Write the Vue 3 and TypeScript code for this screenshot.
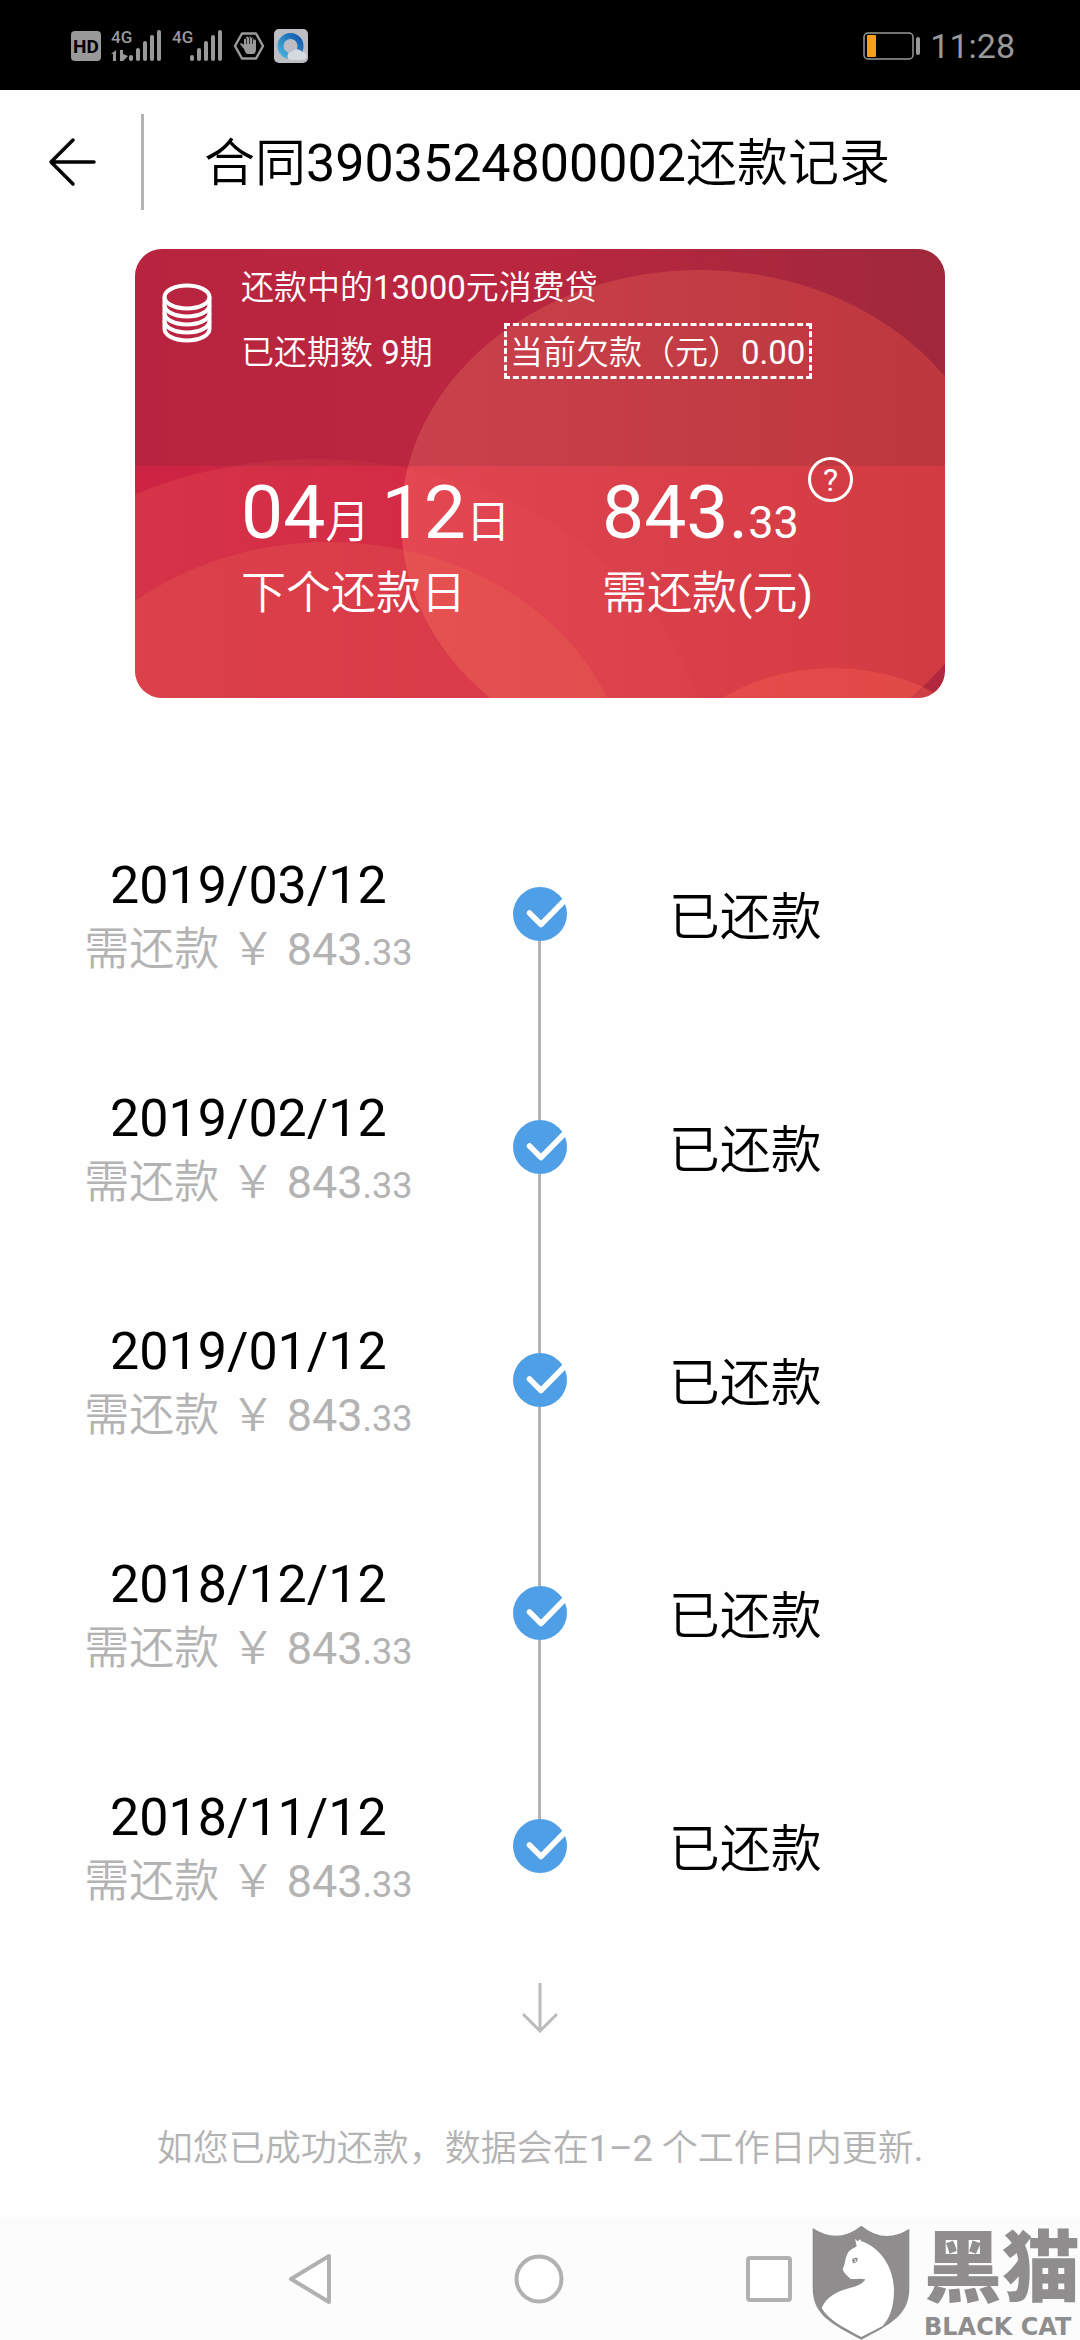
<script setup lang="ts">
interface Installment {
  date: string
  whole: string
  cents: string
  status: string
}

const contractNo = '3903524800002'

const installments: Installment[] = [
  '2019/03/12',
  '2019/02/12',
  '2019/01/12',
  '2018/12/12',
  '2018/11/12',
].map((date) => ({ date, whole: '843', cents: '.33', status: '已还款' }))
</script>

<template>
  <div class="page">
    <div class="statusbar">
      <svg class="status-icons" width="238" height="52" viewBox="71 20 238 52" aria-hidden="true">
        <rect x="71" y="31" width="30" height="30" rx="4" fill="#999" />
        <text x="86" y="53" font-size="19" font-weight="700" text-anchor="middle" fill="#000">HD</text>
        <g fill="#999">
          <text class="net" x="111" y="43" font-size="17">4G</text>
          <text class="net" x="172" y="43" font-size="17">4G</text>
          <path d="M111 54l5-4v11h-3v-7zM120 50h3v4l5 2-5 5h-3z" />
          <rect x="129" y="55" width="4" height="6" rx="2" />
          <rect x="136" y="48" width="4" height="13" rx="2" />
          <rect x="143" y="41" width="4" height="20" rx="2" />
          <rect x="150" y="35" width="4" height="26" rx="2" />
          <rect x="157" y="30" width="4" height="31" rx="2" />
          <rect x="190" y="55" width="4" height="6" rx="2" />
          <rect x="197" y="48" width="4" height="13" rx="2" />
          <rect x="204" y="41" width="4" height="20" rx="2" />
          <rect x="211" y="35" width="4" height="26" rx="2" />
          <rect x="218" y="30" width="4" height="31" rx="2" />
        </g>
        <path d="M242 33.500h14l7 12.500-7 12.500h-14l-7-12.500z" fill="none" stroke="#999" stroke-width="2.500" stroke-linejoin="round" />
        <path d="M244 49l-4-5c0-1 2-1 3 0l1 1v-5c0-2 2-2 2 0v-2c0-2 2-2 2.500 0 0-2 2.500-2 2.500 0v1c0-2 2.500-2 2.500 0v2c0-2 2.500-2 2.500 0v8c0 3-1 5-3 5h-5c-2 0-3-2-4-5z" fill="#999" />
        <path d="M246.500 38v6M249.500 37v7M252.500 38v6" stroke="#000" stroke-width="0.700" />
        <defs>
          <linearGradient id="ring" x1="0" y1="1" x2="1" y2="0">
            <stop offset="0" stop-color="#45b3dc" />
            <stop offset="1" stop-color="#1258b0" />
          </linearGradient>
        </defs>
        <rect x="274" y="29" width="34" height="34" rx="5" fill="#bcbec4" />
        <circle cx="290.500" cy="46" r="10" fill="none" stroke="url(#ring)" stroke-width="6" />
        <path d="M291 60a4 4 0 0 1 1-8 6 6 0 0 1 10 0 4 4 0 0 1 1 8z" fill="#d5dae1" />
      </svg>
      <div class="status-right">
        <svg width="58" height="28" viewBox="0 0 58 28" aria-hidden="true">
          <rect x="1" y="1" width="49" height="26" rx="4" fill="none" stroke="#999" stroke-width="1.500" />
          <rect x="4" y="3" width="9" height="22" rx="1" fill="#ff9c1c" />
          <rect x="53" y="5" width="4" height="18" rx="2" fill="#999" />
        </svg>
        <time class="clock">11:28</time>
      </div>
    </div>

    <header class="header">
      <button class="back" type="button" aria-label="返回">
        <svg width="48" height="50" viewBox="0 0 48 50" fill="none" stroke="#000" stroke-width="3.500" stroke-linecap="round" stroke-linejoin="round">
          <path d="M46 25H3M25 3L3 25l22 22" />
        </svg>
      </button>
      <h1 class="title">合同<span class="number">{{ contractNo }}</span>还款记录</h1>
    </header>

    <main class="main">
      <section class="card">
        <svg class="card-bg" viewBox="0 0 810 449" preserveAspectRatio="none" aria-hidden="true">
          <defs>
            <linearGradient id="base">
              <stop offset="0" stop-color="#cc2442" />
              <stop offset="0.450" stop-color="#cf2643" />
              <stop offset="1" stop-color="#b1283e" />
            </linearGradient>
            <linearGradient id="sun">
              <stop offset="0" stop-color="#e04551" />
              <stop offset="1" stop-color="#d13940" />
            </linearGradient>
            <linearGradient id="hill">
              <stop offset="0.200" stop-color="#ff7e64" stop-opacity="0.200" />
              <stop offset="0.600" stop-color="#ff5a5a" stop-opacity="0.120" />
              <stop offset="1" stop-color="#ff5a5a" stop-opacity="0.060" />
            </linearGradient>
          </defs>
          <rect width="810" height="449" fill="url(#base)" />
          <ellipse cx="565" cy="271" rx="299" ry="250" fill="url(#sun)" />
          <ellipse cx="180" cy="542" rx="400" ry="332" fill="url(#hill)" />
          <ellipse cx="194" cy="542" rx="300" ry="249" fill="#f07055" fill-opacity="0.240" />
          <ellipse cx="698" cy="576" rx="189" ry="157" fill="#f2604f" fill-opacity="0.420" />
          <rect width="810" height="217" fill="#282828" fill-opacity="0.120" />
        </svg>

        <svg class="coins" width="50" height="60" viewBox="0 0 50 60" fill="none" stroke="#fff" stroke-width="4" aria-hidden="true">
          <ellipse cx="25" cy="14" rx="22.500" ry="11.500" />
          <path d="M2.500 14v32a22.500 11.500 0 0 0 45 0V14" />
          <path d="M2.500 22a22.500 11.500 0 0 0 45 0M2.500 30a22.500 11.500 0 0 0 45 0M2.500 38a22.500 11.500 0 0 0 45 0" />
        </svg>

        <div class="card-body">
          <p class="loan">还款中的13000元消费贷</p>
          <div class="progress">
            <span class="paid">已还期数 9期</span>
            <span class="debt">当前欠款（元）0.00</span>
          </div>
          <div class="figures">
            <div class="figure">
              <p class="value">04<small>月 </small>12<small>日</small></p>
              <p class="label">下个还款日</p>
            </div>
            <div class="figure">
              <p class="value">843.<small>33</small></p>
              <p class="label">需还款(元)</p>
              <button class="help" type="button" aria-label="说明">?</button>
            </div>
          </div>
        </div>
      </section>

      <ol class="timeline">
        <li v-for="item in installments" :key="item.date" class="entry">
          <div class="due">
            <time class="date number">{{ item.date }}</time>
            <span class="amount">需还款 ￥ {{ item.whole }}<small>{{ item.cents }}</small></span>
          </div>
          <div class="marker">
            <svg class="dot" width="54" height="54" viewBox="0 0 54 54" aria-hidden="true">
              <circle cx="27" cy="27" r="27" fill="#4f9fe6" />
              <path d="M16.500 26L28 37.500 52 13" fill="none" stroke="#fff" stroke-width="5.500" stroke-linecap="round" stroke-linejoin="round" />
            </svg>
          </div>
          <span class="status">{{ item.status }}</span>
        </li>
      </ol>

      <svg class="more" width="36" height="50" viewBox="0 0 36 50" fill="none" stroke="#bbb" stroke-width="3" aria-hidden="true">
        <path d="M18 0v48M1 31l17 17 17-17" />
      </svg>
      <p class="note">如您已成功还款，数据会在1–2 个工作日内更新.</p>
    </main>

    <nav class="navbar">
      <button type="button" aria-label="后退">
        <svg width="44" height="52" viewBox="0 0 44 52" fill="#fff" stroke="#b1b1b1" stroke-width="4" stroke-linejoin="round">
          <path d="M41 3v46L3 26z" />
        </svg>
      </button>
      <button type="button" aria-label="主屏幕">
        <svg width="50" height="50" viewBox="0 0 50 50" fill="#fff" stroke="#b1b1b1" stroke-width="4">
          <circle cx="25" cy="25" r="22.500" />
        </svg>
      </button>
      <button type="button" aria-label="最近任务">
        <svg width="46" height="46" viewBox="0 0 46 46" fill="#fff" stroke="#b1b1b1" stroke-width="4">
          <rect x="2" y="2" width="42" height="42" rx="2" />
        </svg>
      </button>
    </nav>

    <div class="watermark">
      <svg width="98" height="115" viewBox="92 73 294 345" aria-hidden="true">
        <path d="M94 82Q170 132 240 75Q310 132 384 84V262C384 345 325 372 240 417C155 372 94 345 94 262Z" fill="#8f8d8e" />
        <path d="M221 114L229 122L237 116L240 122C292 138 337 195 338 268C338 320 325 352 304 376L240 409C190 382 140 358 121 322C135 290 165 272 205 262C230 256 244 250 252 236C235 232 222 236 208 235C200 226 187 218 184 205C192 192 190 172 200 156C208 144 222 142 226 136Z" fill="#fff" />
        <path d="M212 178C214 172 222 170 229 173C230 182 224 188 214 188C216 184 213 181 212 178Z" fill="#8f8d8e" />
        <path d="M219 174l4 6-3 5" fill="none" stroke="#fff" stroke-width="3" />
      </svg>
      <div class="brand">
        <span class="brand-cn">黑猫</span>
        <span class="brand-en">BLACK CAT</span>
      </div>
    </div>
  </div>
</template>

<style>
body {
  margin: 0;
  background: #fff;
}
</style>

<style scoped>
.page {
  position: relative;
  display: flex;
  flex-direction: column;
  min-height: 100vh;
  background: #fefefe;
  color: #000;
  font-family: Roboto, "Noto Sans CJK SC DemiLight", "Noto Sans CJK SC", sans-serif;
  font-weight: 400;
}

p,
h1,
ol {
  margin: 0;
  padding: 0;
  font-weight: inherit;
}

button {
  display: flex;
  padding: 0;
  border: 0;
  background: none;
  color: inherit;
  font-family: inherit;
}

.statusbar {
  display: flex;
  box-sizing: border-box;
  align-items: center;
  justify-content: space-between;
  height: 90px;
  padding: 2px 65px 0 71px;
  background: #000;
}

.net {
  font-family: "Liberation Sans Narrow", Roboto, sans-serif;
  font-weight: 500;
}

.status-right {
  display: flex;
  align-items: center;
  gap: 9px;
}

.clock {
  color: #999;
  font-size: 34px;
  line-height: 36px;
}

.header {
  display: flex;
  align-items: center;
  height: 144px;
  padding-left: 48px;
}

.back {
  align-items: center;
  height: 96px;
  padding-right: 45px;
  border-right: 3px solid #b3b3b3;
}

.title {
  margin-left: 60px;
  padding-top: 4px;
  font-size: 51px;
  line-height: 60px;
}

.number {
  font-size: 52px;
}

.main {
  display: flex;
  flex: 1;
  flex-direction: column;
  align-items: center;
}

.card {
  position: relative;
  display: flex;
  box-sizing: border-box;
  width: 75%;
  margin-top: 15px;
  padding: 14px 27px 74px;
  overflow: hidden;
  border-radius: 27px;
  color: #fff;
}

.card-bg {
  position: absolute;
  inset: 0;
  width: 100%;
  height: 100%;
}

.coins {
  position: relative;
  flex: none;
  margin: 20px 29px 0 0;
}

.card-body {
  position: relative;
  flex: 1;
}

.loan {
  font-size: 33px;
  line-height: 50px;
}

.progress {
  display: flex;
  align-items: center;
  margin-top: 10px;
  font-size: 33px;
  line-height: 47px;
}

.paid {
  width: 263px;
  padding-top: 3px;
}

.debt {
  padding: 3px 4px 0 3px;
  border: 3px dashed #fff;
  white-space: nowrap;
}

.figures {
  display: flex;
  margin-top: 96px;
}

.figure {
  position: relative;
  width: 361px;
  flex: none;
}

.figure:last-child {
  width: auto;
}

.value {
  font-size: 75px;
  line-height: 75px;
  white-space: pre;
}

.value small {
  font-size: 45px;
}

.label {
  margin-top: 4px;
  font-size: 45px;
  line-height: 60px;
}

.help {
  position: absolute;
  top: -18px;
  left: 206px;
  align-items: center;
  justify-content: center;
  width: 45px;
  height: 45px;
  border: 3px solid #fff;
  border-radius: 50%;
  font-size: 32px;
  line-height: 36px;
}

.timeline {
  width: 100%;
  margin-top: 156px;
  list-style: none;
}

.entry {
  display: grid;
  grid-template-columns: 46% 8% 30%;
  min-height: 233px;
}

.entry:last-child {
  min-height: 128px;
}

.due {
  display: flex;
  flex-direction: column;
  align-items: center;
  line-height: 64px;
}

.amount {
  color: #b3b3b3;
  font-size: 45px;
}

.amount small {
  font-size: 36px;
}

.marker {
  display: flex;
  flex-direction: column;
  align-items: center;
}

.marker::before,
.marker::after {
  width: 3px;
  background: #b3b3b3;
  content: "";
}

.marker::before {
  height: 33px;
}

.marker::after {
  flex: 1;
}

.entry:first-child .marker::before,
.entry:last-child .marker::after {
  background: none;
}

.dot {
  display: block;
}

.status {
  font-size: 51px;
  line-height: 128px;
  text-align: center;
}

.more {
  margin-top: 66px;
}

.note {
  margin-top: 89px;
  color: #b3b3b3;
  font-size: 36px;
  line-height: 54px;
}

.navbar {
  display: flex;
  align-items: center;
  justify-content: center;
  gap: 182px;
  height: 122px;
  background: #fcfcfc;
}

.watermark {
  position: absolute;
  right: 0;
  bottom: 0;
  display: flex;
  gap: 14px;
  color: #8f8d8e;
}

.brand {
  display: flex;
  flex-direction: column;
}

.brand-cn {
  font-family: Roboto, "Noto Sans CJK SC", sans-serif;
  font-size: 78px;
  font-weight: 900;
  line-height: 90px;
}

.brand-en {
  font-family: "DejaVu Sans", sans-serif;
  font-size: 24px;
  font-weight: 700;
  line-height: 24px;
  white-space: nowrap;
}
</style>
